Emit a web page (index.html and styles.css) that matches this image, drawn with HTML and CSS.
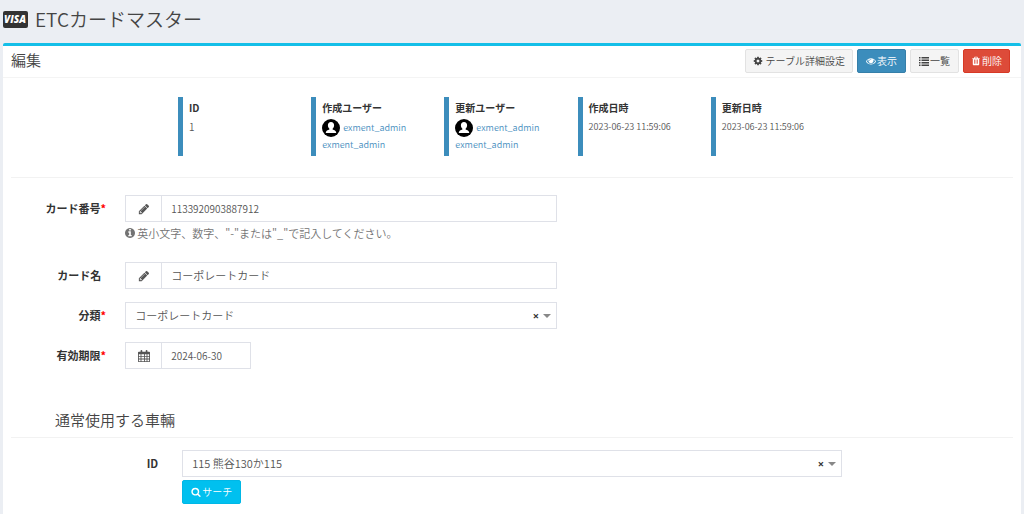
FILE: index.html
```html
<!DOCTYPE html>
<html lang="ja">
<head>
<meta charset="utf-8">
<meta name="viewport" content="width=device-width, initial-scale=1">
<title>ETCカードマスター</title>
<link rel="stylesheet" href="styles.css">
</head>
<body>
<svg class="sprite" aria-hidden="true">
  <symbol id="pencil" viewBox="0 0 1792 1792"><path d="M491 1536l91-91-235-235-91 91v107h128v128h107zm523-928q0-22-22-22-10 0-17 7l-542 542q-7 7-7 17 0 22 22 22 10 0 17-7l542-542q7-7 7-17zm-54-192l416 416-832 832h-416v-416zm683 96q0 53-37 90l-166 166-416-416 166-165q36-38 90-38 53 0 91 38l235 234q37 39 37 91z"/></symbol>
  <symbol id="user" viewBox="0 0 18 18"><circle cx="9" cy="9" r="9"/><path fill="#fff" d="M9 3C7 3 5.900 4.400 5.900 6.300c0 1.500.6 2.700 1.500 3.400v.9c-1.800.5-3.400 1.100-3.700 3.400h10.600c-.3-2.300-1.900-2.900-3.700-3.400v-.9c.9-.7 1.500-1.900 1.500-3.400C12.100 4.400 11 3 9 3z"/></symbol>
</svg>

<header class="page-header">
  <svg class="visa" viewBox="0 0 25 17" aria-hidden="true"><rect width="25" height="17" rx="2"/><text x="12" y="12">VISA</text></svg>
  <h1>ETCカードマスター</h1>
</header>

<main class="box">
  <div class="box-header">
    <h2>編集</h2>
    <div class="tools">
      <button type="button" class="btn btn-default btn-spaced"><svg class="icon" viewBox="0 0 1792 1792"><path d="M1152 896q0-106-75-181t-181-75-181 75-75 181 75 181 181 75 181-75 75-181zm512-109v222q0 12-8 23t-20 13l-185 28q-19 54-39 91 35 50 107 138 10 12 10 25t-9 23q-27 37-99 108t-94 71q-12 0-26-9l-138-108q-44 23-91 38-16 136-29 186-7 28-36 28h-222q-14 0-24.500-8.500t-11.500-21.500l-28-184q-49-16-90-37l-141 107q-10 9-25 9-14 0-25-11-126-114-165-168-7-10-7-23 0-12 8-23 15-21 51-66.500t54-70.500q-27-50-41-99l-183-27q-13-2-21-12.500t-8-23.500v-222q0-12 8-23t19-13l186-28q14-46 39-92-40-57-107-138-10-12-10-24 0-10 9-23 26-36 98.500-107.500t94.500-71.500q13 0 26 10l138 107q44-23 91-38 16-136 29-186 7-28 36-28h222q14 0 24.500 8.500t11.500 21.500l28 184q49 16 90 37l142-107q9-9 24-9 13 0 25 10 129 119 165 170 7 8 7 22 0 12-8 23-15 21-51 66.500t-54 70.500q26 50 41 98l183 28q13 2 21 12.500t8 23.500z"/></svg>テーブル詳細設定</button>
      <button type="button" class="btn btn-primary"><svg class="icon" viewBox="0 0 1792 1792"><path d="M1664 960q-152-236-381-353 61 104 61 225 0 185-131.500 316.500t-316.500 131.500-316.500-131.500-131.500-316.500q0-121 61-225-229 117-381 353 133 205 333.500 326.500t434.500 121.500 434.500-121.500 333.500-326.500zm-720-384q0-20-14-34t-34-14q-125 0-214.500 89.500t-89.500 214.500q0 20 14 34t34 14 34-14 14-34q0-86 61-147t147-61q20 0 34-14t14-34zm848 384q0 34-20 69-140 230-376.500 368.500t-499.500 138.500-499.500-139-376.500-368q-20-35-20-69t20-69q140-229 376.500-368t499.500-139 499.500 139 376.500 368q20 35 20 69z"/></svg>表示</button>
      <button type="button" class="btn btn-default"><svg class="icon" viewBox="0 0 20 20"><path d="M0 2h3v3H0zM5 2h15v3H5zM0 7h3v3H0zM5 7h15v3H5zM0 12h3v3H0zM5 12h15v3H5zM0 17h3v3H0zM5 17h15v3H5z"/></svg>一覧</button>
      <button type="button" class="btn btn-danger"><svg class="icon" viewBox="0 0 1792 1792"><path d="M704 1376v-704q0-14-9-23t-23-9h-64q-14 0-23 9t-9 23v704q0 14 9 23t23 9h64q14 0 23-9t9-23zm256 0v-704q0-14-9-23t-23-9h-64q-14 0-23 9t-9 23v704q0 14 9 23t23 9h64q14 0 23-9t9-23zm256 0v-704q0-14-9-23t-23-9h-64q-14 0-23 9t-9 23v704q0 14 9 23t23 9h64q14 0 23-9t9-23zm-544-992h448l-48-117q-7-9-17-11h-317q-10 2-17 11zm928 32v64q0 14-9 23t-23 9h-96v948q0 83-47 143.500t-113 60.500h-832q-66 0-113-58.500t-47-141.500v-952h-96q-14 0-23-9t-9-23v-64q0-14 9-23t23-9h309l70-167q15-37 54-63t79-26h320q40 0 79 26t54 63l70 167h309q14 0 23 9t9 23z"/></svg>削除</button>
    </div>
  </div>

  <dl class="summary">
    <div class="fact"><dt>ID</dt><dd>1</dd></div>
    <div class="fact"><dt>作成ユーザー</dt><dd class="user"><a href="#"><svg class="avatar" aria-hidden="true"><use href="#user"/></svg>exment_admin</a><a href="#">exment_admin</a></dd></div>
    <div class="fact"><dt>更新ユーザー</dt><dd class="user"><a href="#"><svg class="avatar" aria-hidden="true"><use href="#user"/></svg>exment_admin</a><a href="#">exment_admin</a></dd></div>
    <div class="fact"><dt>作成日時</dt><dd class="date">2023-06-23 11:59:06</dd></div>
    <div class="fact"><dt>更新日時</dt><dd class="date">2023-06-23 11:59:06</dd></div>
  </dl>

  <form class="form">
    <div class="row row-help">
      <label for="number" class="required">カード番号</label>
      <div class="field">
        <div class="control"><span class="addon"><svg class="icon-lg"><use href="#pencil"/></svg></span><input class="numeric" id="number" type="text" value="1133920903887912" aria-describedby="number-help"></div>
        <p class="help" id="number-help"><svg class="icon-help" viewBox="128 128 1536 1536"><path d="M1152 1376v-160q0-14-9-23t-23-9h-96v-512q0-14-9-23t-23-9h-320q-14 0-23 9t-9 23v160q0 14 9 23t23 9h96v320h-96q-14 0-23 9t-9 23v160q0 14 9 23t23 9h448q14 0 23-9t9-23zm-128-896v-160q0-14-9-23t-23-9h-192q-14 0-23 9t-9 23v160q0 14 9 23t23 9h192q14 0 23-9t9-23zm640 416q0 209-103 385.500t-279.500 279.500-385.500 103-385.500-103-279.500-279.500-103-385.500 103-385.500 279.500-279.500 385.500-103 385.500 103 279.500 279.500 103 385.500z"/></svg>英小文字、数字、"-"または"_"で記入してください。</p>
      </div>
    </div>
    <div class="row">
      <label for="name">カード名</label>
      <div class="field"><div class="control"><span class="addon"><svg class="icon-lg"><use href="#pencil"/></svg></span><input id="name" type="text" value="コーポレートカード"></div></div>
    </div>
    <div class="row">
      <label for="kind" class="required">分類</label>
      <div class="field"><div class="control"><select id="kind"><option>コーポレートカード</option></select><button type="button" class="clear" aria-label="クリア">×</button><span class="caret"></span></div></div>
    </div>
    <div class="row">
      <label for="expiry" class="required">有効期限</label>
      <div class="field"><div class="control control-date"><span class="addon"><svg class="icon-lg" viewBox="0 0 14 14"><path fill-rule="evenodd" d="M1 2h2V1q0-1 1-1t1 1v1h4V1q0-1 1-1t1 1v1h2q1 0 1 1v10q0 1-1 1H1q-1 0-1-1V3q0-1 1-1zM1 5v2h2V5zm3 0v2h3V5zm4 0v2h2V5zm3 0v2h2V5zM1 8v2h2V8zm3 0v2h3V8zm4 0v2h2V8zm3 0v2h2V8zM1 11v2h2v-2zm3 0v2h3v-2zm4 0v2h2v-2zm3 0v2h2v-2z"/></svg></span><input class="numeric" id="expiry" type="text" value="2024-06-30"></div></div>
    </div>

    <h3>通常使用する車輛</h3>
    <div class="row row-nested">
      <label for="vehicle">ID</label>
      <div class="field">
        <div class="control"><select id="vehicle"><option>115 熊谷130か115</option></select><button type="button" class="clear" aria-label="クリア">×</button><span class="caret"></span></div>
        <button type="button" class="btn btn-info"><svg class="icon" viewBox="0 0 1792 1792"><path d="M1216 832q0-185-131.500-316.500t-316.500-131.500-316.500 131.500-131.500 316.500 131.500 316.500 316.500 131.500 316.500-131.500 131.500-316.500zm512 832q0 52-38 90t-90 38q-54 0-90-38l-343-342q-179 124-399 124-143 0-273.500-55.500t-225-150-150-225-55.500-273.500 55.500-273.500 150-225 225-150 273.500-55.500 273.500 55.500 225 150 150 225 55.500 273.500q0 220-124 399l343 343q37 37 37 90z"/></svg>サーチ</button>
      </div>
    </div>
  </form>
</main>
</body>
</html>
```

FILE: styles.css
```css
* { box-sizing: border-box; }
html { background: #ebeef3; }
body {
  margin: 0;
  min-height: 100vh;
  display: flex;
  flex-direction: column;
  color: #333;
  font: 350 11px/16px "Noto Sans CJK JP", sans-serif;
}
h1, h2, h3, dl, dd, p { margin: 0; }
h1, h2, h3 { font-weight: 350; color: #444; }
button, input, select { font: inherit; }
svg { fill: currentColor; flex: none; }
a { color: #4a8fc0; text-decoration: none; }
.sprite { position: absolute; width: 0; height: 0; }

.page-header {
  display: flex;
  align-items: center;
  gap: 7px;
  height: 43px;
  padding: 0 3px 5px;
}
.page-header h1 { font-size: 19px; line-height: 28px; }
.visa { width: 25px; height: 17px; }
.visa text {
  fill: #fff;
  font: italic 800 10px "Open Sans", sans-serif;
  text-anchor: middle;
}

.box {
  flex: 1;
  margin: 0 3px;
  background: #fff;
  border-top: 3px solid #14bfe8;
  border-radius: 2px 2px 0 0;
}
.box-header {
  display: flex;
  align-items: flex-start;
  justify-content: space-between;
  padding: 3px 11px 4px 8px;
  border-bottom: 1px solid #f4f4f4;
}
.box-header h2 { font-size: 15px; line-height: 22px; }
.tools { display: flex; gap: 4px; }

.btn {
  display: inline-flex;
  align-items: center;
  justify-content: center;
  gap: 1px;
  height: 24px;
  padding: 0 8px;
  border: 1px solid;
  border-radius: 2px;
  font-size: 10px;
}
.btn-spaced { gap: 3px; padding: 0 7px; }
.btn-default { background: #f4f4f4; border-color: #e2e2e2; color: #444; }
.btn-primary { background: #3c8dbc; border-color: #367fa9; color: #fff; }
.btn-danger { padding: 0 7px; background: #dd4b39; border-color: #d73925; color: #fff; }
.btn-info { background: #00c0ef; border-color: #00b7e6; color: #fff; }
.icon { width: 10px; height: 10px; }
.icon-lg { width: 12px; height: 12px; }
.icon-help { width: 10px; height: 10px; margin-right: 2px; }

.summary {
  display: grid;
  grid-template-columns: repeat(5, 1fr);
  margin: 0 8px;
  padding: 19px 16.6% 21px 16.4%;
  border-bottom: 1px solid #f2f2f2;
}
.fact {
  min-height: 59px;
  padding: 3px 0 2px 6px;
  border-left: 5px solid #3c8dbc;
  font-size: 10px;
}
.fact dt { font-weight: bold; }
.fact dd { padding-top: 3px; color: #555; }
.fact .date { font-size: 9px; white-space: nowrap; }
.fact .user { display: grid; font-size: 9px; line-height: 16px; }
.user a { display: flex; align-items: center; gap: 3px; }
.avatar { width: 18px; height: 18px; color: #000; }

.form { padding: 17px 0 8px; }
.row {
  display: grid;
  grid-template-columns: 12% 42.4%;
  margin-bottom: 13px;
}
.row-help { margin-bottom: 21px; }
.row-nested { grid-template-columns: 17.6% 64.8%; }
.row label {
  padding: 5px 24px 0 0;
  text-align: right;
  font-weight: bold;
}
.required::after {
  content: "*";
  margin-right: -5px;
  color: #f00;
}
.control {
  display: flex;
  align-items: center;
  height: 27px;
  border: 1px solid #dfe1e8;
  color: #555;
}
.control-date { width: 126px; }
.addon {
  display: flex;
  align-items: center;
  justify-content: center;
  align-self: stretch;
  width: 36px;
  border-right: 1px solid #dfe1e8;
}
.control input, .control select {
  flex: 1;
  min-width: 0;
  height: 25px;
  padding: 0 9px 1px;
  border: 0;
  background: none;
  color: inherit;
  appearance: none;
}
.control .numeric { padding: 0 9px; font-size: 10px; }
.clear {
  width: 10px;
  padding: 0;
  border: 0;
  background: none;
  color: #333;
  font: bold 11px "Open Sans", sans-serif;
}
.caret {
  margin: 0 5px 0 2px;
  border: 4px solid transparent;
  border-top-color: #888;
  border-bottom: 0;
}
.help {
  display: flex;
  align-items: center;
  padding-top: 3px;
  color: #737373;
}
.form h3 {
  margin: 0 8px 12px;
  padding: 27px 0 6px 44px;
  border-bottom: 1px solid #f2f2f2;
  font-size: 15px;
  line-height: 22px;
}
.row-nested .btn { margin-top: 3px; }
```
